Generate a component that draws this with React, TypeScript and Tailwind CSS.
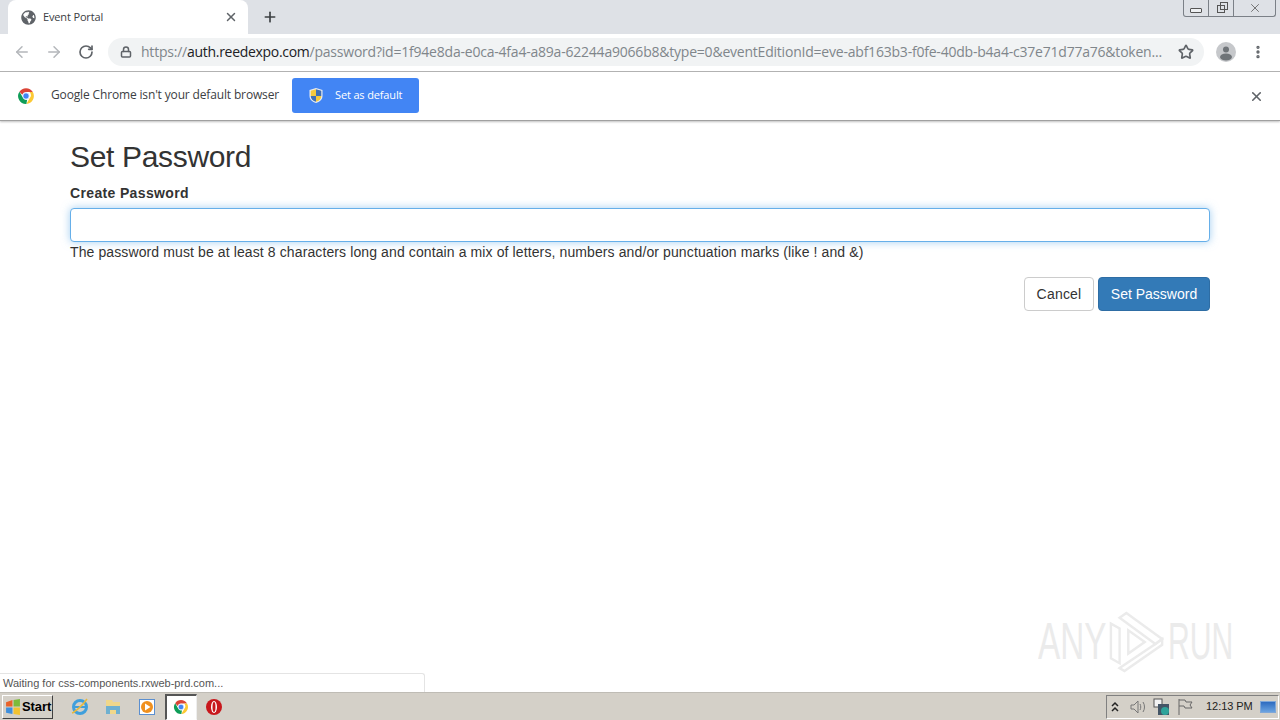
import { ArrowLeft, ArrowRight, RotateCw, Lock, Star, X, Plus, EllipsisVertical } from "lucide-react";
import { FaGlobeAmericas } from "react-icons/fa";

function ChromeLogo({ size = 18 }: { size?: number }) {
  return (
    <svg width={size} height={size} viewBox="0 0 48 48">
      <path d="M24 3a21 21 0 0 1 18.200 10.500H24a10.500 10.500 0 0 0-10 7.300L6.500 12.400A21 21 0 0 1 24 3z" fill="#db4437" />
      <path d="M42.200 13.500A21 21 0 0 1 25 45l9-15.600A10.500 10.500 0 0 0 33 13.500z" fill="#fcc934" />
      <path d="M25 45A21 21 0 0 1 6.500 12.400l8.700 15A10.500 10.500 0 0 0 27 34.100z" fill="#0f9d58" />
      <circle cx="24" cy="24" r="8.500" fill="#4285f4" stroke="#fff" strokeWidth="2" />
    </svg>
  );
}

function ShieldIcon() {
  return (
    <svg width="16" height="17" viewBox="0 0 16 17">
      <path d="M8 1l6.500 2v6c0 3.500-3 6-6.500 7-3.500-1-6.500-3.500-6.500-7V3z" fill="#e9edf2" />
      <path d="M8 2.200l5.300 1.600V9H8zM8 9v5.800C5 13.800 2.700 12 2.700 9z" fill="#3f6fb5" />
      <path d="M8 2.200v6.800H2.700V3.800zM8 9h5.300c0 3-2.300 4.800-5.300 5.800z" fill="#f5c93d" />
    </svg>
  );
}

function WatermarkLogo() {
  return (
    <svg width="58" height="64" viewBox="0 0 60 64" fill="none" stroke="#ebebeb" strokeWidth="2.500">
      <path d="M3 14v36l9 5V19z" />
      <path d="M12 8l7-5 37 27-7 5z" />
      <path d="M12 60l37-25 7-5v6L17 63z" />
      <path d="M21 21v24l17-12z" />
    </svg>
  );
}

function TaskbarIcons() {
  return (
    <div className="flex items-center">
      <svg className="ml-[17px]" width="20" height="20" viewBox="0 0 20 20">
        <circle cx="10" cy="10" r="6.500" fill="none" stroke="#3f9fdc" strokeWidth="3" />
        <path d="M5 10h10" stroke="#3f9fdc" strokeWidth="2" />
        <path d="M2 16c3-1 11-8 15-14" stroke="#e8b93a" strokeWidth="1.500" fill="none" />
      </svg>
      <svg className="ml-[13px]" width="20" height="20" viewBox="0 0 20 20">
        <path d="M3 3h6l1 2h7v12H3z" fill="#f0d78a" />
        <path d="M3 9h14v8h-4v-4H7v4H3z" fill="#6fb0d0" />
      </svg>
      <svg className="ml-[14px]" width="20" height="20" viewBox="0 0 20 20">
        <rect x="2.500" y="2.500" width="15" height="15" fill="#fff" stroke="#5b8fd0" />
        <circle cx="10" cy="10" r="6" fill="#f0901e" />
        <path d="M8 6.500v7l5.500-3.500z" fill="#fff" />
      </svg>
      <div className="ml-[8px] flex h-[26px] w-[32px] items-center justify-center border border-t-2 border-l-2 border-[#555] border-b-white border-r-[#eee] bg-white pr-[2px]">
        <ChromeLogo size={16} />
      </div>
      <svg className="ml-[8px]" width="18" height="18" viewBox="0 0 18 18">
        <circle cx="9" cy="9" r="8" fill="#c8171c" />
        <ellipse cx="9" cy="9" rx="3" ry="6" fill="#fff" />
        <ellipse cx="9" cy="9" rx="1.500" ry="5" fill="#c8171c" />
      </svg>
    </div>
  );
}

export default function App() {
  return (
    <div className="relative flex h-screen w-[1280px] flex-col overflow-hidden bg-white font-['Liberation_Sans',sans-serif] text-[#333]">
      {/* tab strip */}
      <div className="flex h-[34px] items-center bg-[#dee1e6]">
        <div className="ml-2 flex h-[34px] w-[240px] items-center rounded-t-lg bg-white pr-[10px] pl-[13px] font-['Open_Sans',sans-serif]">
          <FaGlobeAmericas size={15} className="text-[#5f6368]" />
          <span className="ml-[7px] flex-1 text-[11px] tracking-[-0.15px] text-[#3c4043]">Event Portal</span>
          <X size={14} strokeWidth={2.500} className="text-[#5f6368]" />
        </div>
        <Plus size={16} strokeWidth={2.500} className="ml-[14px] text-[#3c4043]" />
      </div>
      {/* window buttons */}
      <div className="absolute top-0 right-[4px] flex h-[17px] w-[93px] rounded-b-[3px] border border-t-0 border-[#7b8087]">
        <div className="flex w-[25px] items-center justify-center border-r border-[#7b8087] pt-[4px]">
          <div className="h-[5px] w-[12px] rounded-[1px] border border-[#555] bg-[#eef0f2]" />
        </div>
        <div className="flex w-[25px] items-center justify-center border-r border-[#7b8087] pt-[2px]">
          <div className="relative h-[8px] w-[8px] border border-[#555]">
            <div className="absolute -top-[4px] left-[2px] h-[8px] w-[8px] border border-[#555]" />
          </div>
        </div>
        <div className="flex flex-1 items-center justify-center">
          <X size={14} strokeWidth={1.500} className="text-[#666]" />
        </div>
      </div>
      {/* toolbar */}
      <div className="flex h-[38px] items-center border-b border-[#b5b5b5] bg-white pb-[2px]">
        <ArrowLeft size={18} strokeWidth={2} className="ml-[13px] text-[#b4b7bb]" />
        <ArrowRight size={18} strokeWidth={2} className="ml-[14px] text-[#b4b7bb]" />
        <RotateCw size={16} strokeWidth={2.500} className="ml-[15px] text-[#5f6368]" />
        <div className="ml-[14px] flex h-[28px] w-[1096px] items-center rounded-full bg-[#f1f3f4] pr-[10px] pl-[12px]">
          <Lock size={12} strokeWidth={3} className="text-[#5f6368]" />
          <div className="ml-[9px] font-['Open_Sans',sans-serif] text-[14px] tracking-[-0.215px] whitespace-nowrap text-[#80868b]">
            https://<span className="tracking-[-0.3px] text-[#202124]">auth.reedexpo.com</span>
            /password?id=1f94e8da-e0ca-4fa4-a89a-62244a9066b8&amp;type=0&amp;eventEditionId=eve-abf163b3-f0fe-40db-b4a4-c37e71d77a76&amp;token...
          </div>
          <Star size={16} strokeWidth={2.500} className="ml-auto text-[#5f6368]" />
        </div>
        <div className="ml-[12px] flex h-[20px] w-[20px] items-center justify-center overflow-hidden rounded-full bg-[#c6c8cb]">
          <svg width="20" height="20" viewBox="0 0 20 20">
            <circle cx="10" cy="7.500" r="3" fill="#6f7478" />
            <ellipse cx="10" cy="15" rx="6" ry="3.500" fill="#6f7478" />
          </svg>
        </div>
        <EllipsisVertical size={16} strokeWidth={3} className="ml-[14px] text-[#5f6368]" />
      </div>
      {/* default browser bar */}
      <div className="z-10 flex h-[49px] items-center border-b border-[#a0a0a0] bg-white pb-[2px] shadow-[0_1px_2px_rgba(0,0,0,0.25)]">
        <div className="mt-[2px] ml-[17px]">
          <ChromeLogo />
        </div>
        <span className="ml-[16px] font-['Open_Sans',sans-serif] text-[12px] tracking-[-0.15px] text-[#3c4043]">Google Chrome isn't your default browser</span>
        <div className="ml-[13px] flex h-[35px] w-[127px] items-center rounded-[3px] bg-[#4285f4] pl-[16px]">
          <ShieldIcon />
          <span className="ml-[11px] font-['Open_Sans',sans-serif] text-[11px] tracking-[-0.15px] text-white">Set as default</span>
        </div>
        <X size={15} strokeWidth={2.500} className="mt-[2px] mr-[16px] ml-auto text-[#5f6368]" />
      </div>
      {/* page */}
      <main className="flex flex-1 flex-col px-[70px]">
        <h1 className="mt-[19px] text-[30px] leading-[33px] font-normal tracking-[-0.33px]">Set Password</h1>
        <label className="mt-[10px] text-[14px] leading-[20px] font-bold tracking-[0.35px]">Create Password</label>
        <input
          type="text"
          className="mt-[5px] h-[34px] w-full rounded-[4px] border border-[#66afe9] bg-white shadow-[0_0_8px_rgba(102,175,233,0.6)] outline-none"
        />
        <p className="text-[14px] leading-[20px] tracking-[0.11px]">
          The password must be at least 8 characters long and contain a mix of letters, numbers and/or punctuation marks (like ! and &amp;)
        </p>
        <div className="mt-[15px] flex justify-end gap-[4px]">
          <button className="h-[34px] w-[70px] rounded-[4px] border border-[#ccc] bg-white text-[14px] tracking-[0.2px]">Cancel</button>
          <button className="h-[34px] w-[112px] rounded-[4px] border border-[#2e6da4] bg-[#337ab7] text-[14px] text-white">Set Password</button>
        </div>
      </main>
      {/* watermark */}
      <div className="absolute top-[609px] left-[1038px] flex items-center text-[#ebebeb]">
        <span className="w-[70px] origin-left scale-x-[0.64] text-[52px] leading-none whitespace-nowrap">ANY</span>
        <WatermarkLogo />
        <span className="ml-[2px] w-[64px] origin-left scale-x-[0.58] text-[52px] leading-none whitespace-nowrap">RUN</span>
      </div>
      {/* status bubble */}
      <div className="absolute bottom-[28px] left-0 flex h-[19px] w-[425px] items-center rounded-tr-[3px] border-t border-r border-[#e4e4e4] bg-white pl-[3px] text-[11px] text-[#555]">
        Waiting for css-components.rxweb-prd.com...
      </div>
      {/* taskbar */}
      <div className="flex h-[28px] items-center border-t border-[#bfbcb5] bg-[#d4d0c8] text-black">
        <div className="ml-[2px] flex h-[24px] w-[51px] items-center gap-[1px] border border-t-white border-l-white border-r-[#404040] border-b-[#404040] pl-[2px]">
          <svg width="16" height="16" viewBox="0 0 15 15">
            <path d="M1 3l6-2v6H1z" fill="#e8622a" />
            <path d="M8 1l6-1v7H8z" fill="#7dbb3a" />
            <path d="M1 8h6v6l-6-1z" fill="#3f8fdc" />
            <path d="M8 8h6v7l-6-1z" fill="#f2c230" />
          </svg>
          <span className="text-[13px] font-bold tracking-[-0.1px]">Start</span>
        </div>
        <TaskbarIcons />
        <div className="mr-[1px] ml-auto flex h-[24px] w-[173px] items-center border border-[#808080] border-r-white border-b-white pl-[2px]">
          <svg width="12" height="12" viewBox="0 0 12 12" fill="none" stroke="#222" strokeWidth="1.500">
            <path d="M3 5l3-3 3 3M3 10l3-3 3 3" />
          </svg>
          <svg className="ml-[8px]" width="18" height="16" viewBox="0 0 18 16" fill="none" stroke="#777" strokeWidth="1">
            <path d="M2 6v4h3l4 4V2L5 6zM11 5c1 2 1 4 0 6M14 3c2 3 2 7 0 10" />
          </svg>
          <svg className="ml-[6px]" width="18" height="18" viewBox="0 0 18 18">
            <rect x="1" y="1" width="8" height="8" fill="#f3f3f3" stroke="#555" />
            <rect x="5" y="6" width="11" height="11" fill="#456" />
            <circle cx="12" cy="13" r="4" fill="#2fa39a" />
          </svg>
          <svg className="ml-[5px]" width="18" height="18" viewBox="0 0 18 18" fill="none" stroke="#666">
            <path d="M3 1v16M3 2h6l1 2h6l-2 3 2 3H9L8 8H3" />
          </svg>
          <span className="ml-[12px] text-[11px] tracking-[-0.05px] text-[#222]">12:13 PM</span>
          <div className="mr-[2px] ml-auto h-[12px] w-[16px] border border-[#7fa7d8] bg-gradient-to-b from-[#2d6bc0] to-[#6ba3e0]" />
        </div>
      </div>
    </div>
  );
}
